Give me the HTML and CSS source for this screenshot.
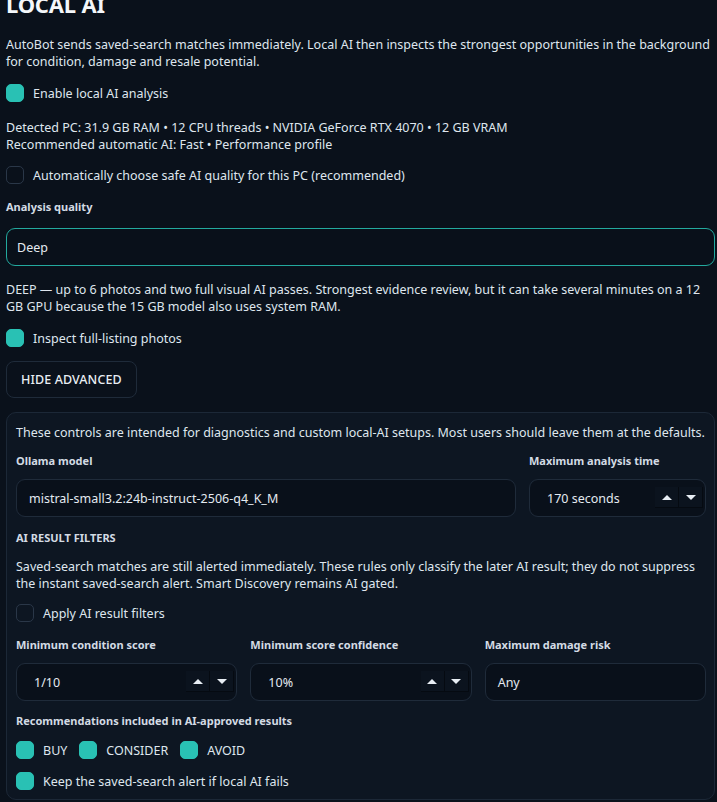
FILE: index.html
```html
<!DOCTYPE html>
<html lang="en">
<head>
<meta charset="utf-8">
<title>Local AI</title>
<link rel="stylesheet" href="styles.css">
</head>
<body>
<main class="page">
  <h1 class="title">LOCAL AI</h1>
  <p class="text desc">AutoBot sends saved-search matches immediately. Local AI then inspects the strongest opportunities in the background for condition, damage and resale potential.</p>
  <label class="check r1"><span class="box on"></span>Enable local AI analysis</label>
  <p class="text info">Detected PC: 31.9 GB RAM • 12 CPU threads • NVIDIA GeForce RTX 4070 • 12 GB VRAM<br>Recommended automatic AI: Fast • Performance profile</p>
  <label class="check r2"><span class="box"></span>Automatically choose safe AI quality for this PC (recommended)</label>
  <div class="label l1">Analysis quality</div>
  <div class="input select">Deep</div>
  <p class="text deep">DEEP — up to 6 photos and two full visual AI passes. Strongest evidence review, but it can take several minutes on a 12 GB GPU because the 15 GB model also uses system RAM.</p>
  <label class="check r3"><span class="box on"></span>Inspect full-listing photos</label>
  <button class="btn">HIDE ADVANCED</button>

  <section class="panel">
    <p class="text">These controls are intended for diagnostics and custom local-AI setups. Most users should leave them at the defaults.</p>
    <div class="grid two">
      <div class="field">
        <div class="label">Ollama model</div>
        <div class="input text-in">mistral-small3.2:24b-instruct-2506-q4_K_M</div>
      </div>
      <div class="field">
        <div class="label">Maximum analysis time</div>
        <div class="input num">170 seconds
          <span class="steps"><span class="step"><span class="tri up"></span></span><span class="step"><span class="tri down"></span></span></span>
        </div>
      </div>
    </div>
    <div class="label heading">AI RESULT FILTERS</div>
    <p class="text filt">Saved-search matches are still alerted immediately. These rules only classify the later AI result; they do not suppress the instant saved-search alert. Smart Discovery remains AI gated.</p>
    <label class="check r4"><span class="box"></span>Apply AI result filters</label>
    <div class="grid three">
      <div class="field">
        <div class="label">Minimum condition score</div>
        <div class="input num">1/10
          <span class="steps"><span class="step"><span class="tri up"></span></span><span class="step"><span class="tri down"></span></span></span>
        </div>
      </div>
      <div class="field">
        <div class="label">Minimum score confidence</div>
        <div class="input num">10%
          <span class="steps"><span class="step"><span class="tri up"></span></span><span class="step"><span class="tri down"></span></span></span>
        </div>
      </div>
      <div class="field">
        <div class="label">Maximum damage risk</div>
        <div class="input text-in">Any</div>
      </div>
    </div>
    <div class="label rec">Recommendations included in AI-approved results</div>
    <div class="checks r5">
      <label class="check"><span class="box on"></span>BUY</label>
      <label class="check"><span class="box on"></span>CONSIDER</label>
      <label class="check"><span class="box on"></span>AVOID</label>
    </div>
    <label class="check r6"><span class="box on"></span>Keep the saved-search alert if local AI fails</label>
  </section>
</main>
</body>
</html>
```

FILE: styles.css
```css
* { box-sizing: border-box; }
html, body { margin: 0; padding: 0; }
body {
  background: #0a111b;
  color: #dfe6ee;
  font-family: "Noto Sans", "Open Sans", sans-serif;
  font-size: 12.5px;
  line-height: 17px;
  overflow: hidden;
  height: 802px;
}
.page {
  display: flex;
  flex-direction: column;
  align-items: flex-start;
  padding: 0 2px 0 6px;
}
.page > * { flex-shrink: 0; }
.title {
  margin: -9px 0 0;
  font-size: 22px;
  line-height: 26px;
  font-weight: 700;
  color: #f4f7fa;
  letter-spacing: -0.2px;
}
.text { margin: 0; }
.desc { margin-top: 19px; }
.check {
  display: flex;
  align-items: center;
  gap: 9px;
  height: 24px;
  white-space: nowrap;
  flex-shrink: 0;
}
.box {
  width: 18px;
  height: 18px;
  border-radius: 5px;
  border: 1px solid #2a3748;
  background: transparent;
  flex: none;
}
.box.on { background: #29c1b4; border-color: #29c1b4; }
.r1 { margin-top: 11px; }
.info { margin-top: 14px; }
.r2 { margin-top: 10px; }
.label {
  font-size: 11px;
  font-weight: 700;
  color: #d3dbe4;
  line-height: 17px;
}
.l1 { margin-top: 11px; }
.input {
  position: relative;
  display: flex;
  align-items: center;
  height: 38px;
  border: 1px solid #1f2b3a;
  border-radius: 9px;
  background: #09101a;
  color: #e4eaf1;
  padding: 0 12px;
}
.select {
  align-self: stretch;
  margin-top: 13px;
  border-color: #23a99e;
  padding-left: 10px;
}
.deep { margin-top: 15px; }
.r3 { margin-top: 11px; }
.btn {
  margin-top: 11px;
  height: 37px;
  padding: 0 14px;
  font: inherit;
  font-weight: 500;
  font-size: 12.5px;
  color: #e8eef4;
  background: #0a111b;
  border: 1px solid #1f2b3a;
  border-radius: 8px;
  letter-spacing: 0.1px;
}
.panel {
  align-self: stretch;
  margin-top: 14px;
  background: #0d1622;
  border: 1px solid #1c2837;
  border-radius: 10px;
  padding: 11px 8px 6px 9px;
  display: flex;
  flex-direction: column;
}
.grid { display: grid; gap: 13px; margin-top: 11px; }
.grid.two { grid-template-columns: 1fr 177px; }
.grid.three { grid-template-columns: 1fr 1fr 1fr; }
.field { display: flex; flex-direction: column; gap: 10px; }
.num { padding-left: 17px; }
.steps {
  position: absolute;
  right: 2px;
  top: 7px;
  display: flex;
}
.step {
  width: 24px;
  height: 21px;
  background: #0b131e;
  border-right: 1px solid #050a11;
  border-bottom: 1px solid #050a11;
  display: flex;
  align-items: center;
  justify-content: center;
}
.tri { width: 0; height: 0; border-left: 5px solid transparent; border-right: 5px solid transparent; }
.tri.up { border-bottom: 5px solid #e8eef4; }
.tri.down { border-top: 5px solid #e8eef4; }
.heading { margin-top: 12px; }
.filt { margin-top: 12px; }
.r4 { margin-top: 9px; align-self: flex-start; }
.rec { margin-top: 11px; }
.checks { display: flex; gap: 12px; margin-top: 9px; }
.r6 { margin-top: 7px; }
```
